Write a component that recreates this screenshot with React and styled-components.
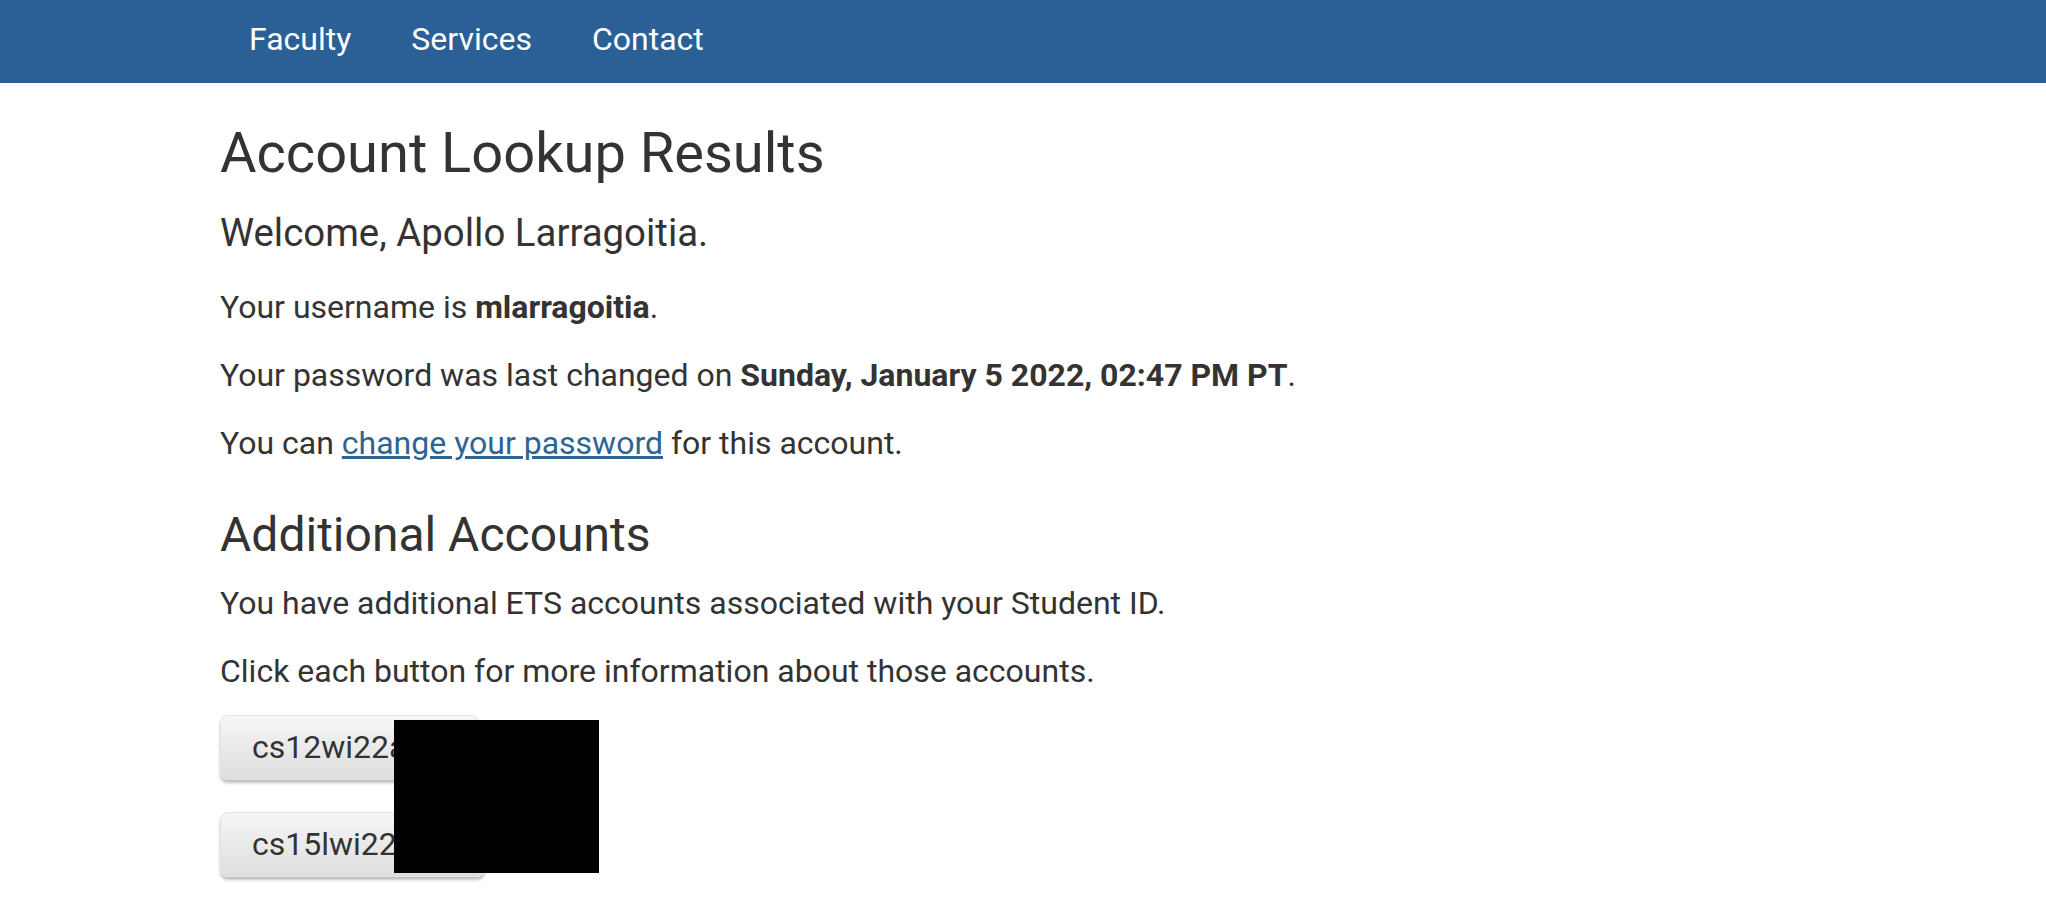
import React from 'react';
import styled, { createGlobalStyle } from 'styled-components';

const GlobalStyle = createGlobalStyle`
  body {
    margin: 0;
    background: #fff;
    font-family: Roboto, "Liberation Sans", Arial, sans-serif;
    color: #333;
  }
`;

const NavBar = styled.nav`
  height: 83px;
  background-color: #2b6096;
  display: flex;
  align-items: center;
  padding-left: 219px;
`;

const NavLink = styled.a`
  color: #fff;
  font-size: 32px;
  line-height: 38px;
  padding: 0 30px 5px;
  text-decoration: none;
`;

const Main = styled.main`
  padding: 0 0 0 220px;
`;

const Title = styled.h1`
  margin: 39px 0 0;
  font-size: 56px;
  line-height: 62px;
  font-weight: 400;
`;

const Welcome = styled.h2`
  margin: 27px 0 0;
  font-size: 38.4px;
  line-height: 44px;
  font-weight: 400;
`;

const SectionTitle = styled.h2`
  margin: 44px 0 0;
  font-size: 48px;
  line-height: 52px;
  font-weight: 400;
`;

const Text = styled.p`
  margin: ${(props) => props.gap}px 0 0;
  font-size: 32px;
  line-height: 44px;
`;

const Link = styled.a`
  color: #2c6594;
  text-decoration: underline;
  text-underline-offset: 2px;
`;

const AccountList = styled.div`
  display: flex;
  flex-direction: column;
  align-items: flex-start;
  gap: 32px;
  margin-top: 22px;
  padding-bottom: 40px;
`;

const AccountButton = styled.button`
  height: 65px;
  width: ${(props) => props.w}px;
  padding: 0 0 2px 31px;
  text-align: left;
  font-family: Roboto, "Liberation Sans", Arial, sans-serif;
  font-size: 32px;
  color: #333;
  border: 1px solid #e2e2e2;
  border-radius: 8px;
  background: linear-gradient(to bottom, #f6f6f6, #dedede);
  box-shadow: 0 3px 3px rgba(0, 0, 0, 0.25);
  cursor: pointer;
`;

const Redaction = styled.div`
  position: absolute;
  left: 394px;
  top: 720px;
  width: 205px;
  height: 153px;
  background: #000;
`;

const accounts = [
  { id: 'cs12wi22a', width: 259 },
  { id: 'cs15lwi22', width: 265 },
];

const App = () => (
  <>
    <GlobalStyle />
    <NavBar>
      <NavLink href="#">Faculty</NavLink>
      <NavLink href="#">Services</NavLink>
      <NavLink href="#">Contact</NavLink>
    </NavBar>
    <Main>
      <Title>Account Lookup Results</Title>
      <Welcome>Welcome, Apollo Larragoitia.</Welcome>
      <Text gap={30}>
        Your username is <b>mlarragoitia</b>.
      </Text>
      <Text gap={24}>
        Your password was last changed on <b>Sunday, January 5 2022, 02:47 PM PT</b>.
      </Text>
      <Text gap={24}>
        You can <Link href="#">change your password</Link> for this account.
      </Text>
      <SectionTitle>Additional Accounts</SectionTitle>
      <Text gap={20}>You have additional ETS accounts associated with your Student ID.</Text>
      <Text gap={24}>Click each button for more information about those accounts.</Text>
      <AccountList>
        {accounts.map((acc) => (
          <AccountButton key={acc.id} w={acc.width}>{acc.id}</AccountButton>
        ))}
      </AccountList>
    </Main>
    <Redaction />
  </>
);

export default App;
